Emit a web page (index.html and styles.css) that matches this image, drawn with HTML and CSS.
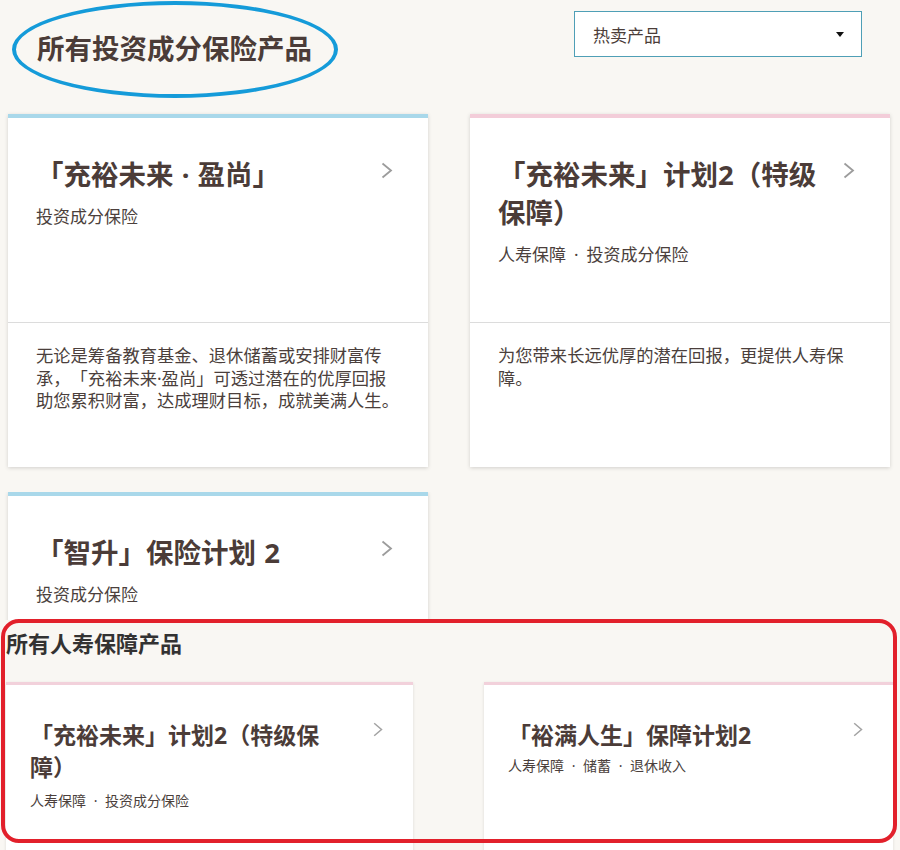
FILE: index.html
```html
<!DOCTYPE html>
<html lang="zh-CN">
<head>
<meta charset="utf-8">
<title>所有投资成分保险产品</title>
<link rel="stylesheet" href="styles.css">
</head>
<body>
<div class="page">
  <header class="header">
    <h1 class="heading">所有投资成分保险产品</h1>
    <div class="select">
      <span class="select-text">热卖产品</span>
      <span class="caret"></span>
    </div>
  </header>

  <section class="grid">
    <article class="card card-blue">
      <div class="card-head">
        <div class="head-text">
          <h2 class="card-title">「充裕未来 · 盈尚」</h2>
          <p class="card-sub">投资成分保险</p>
        </div>
        <svg class="chev" viewBox="0 0 12 17" width="12" height="17"><path d="M1.5 1.5 L10 8.5 L1.5 15.5" fill="none" stroke="#9c9c9c" stroke-width="1.8"/></svg>
      </div>
      <div class="card-desc">无论是筹备教育基金、退休储蓄或安排财富传承，「充裕未来·盈尚」可透过潜在的优厚回报助您累积财富，达成理财目标，成就美满人生。</div>
    </article>

    <article class="card card-pink">
      <div class="card-head">
        <div class="head-text">
          <h2 class="card-title">「充裕未来」计划2（特级保障）</h2>
          <p class="card-sub">人寿保障 · 投资成分保险</p>
        </div>
        <svg class="chev" viewBox="0 0 12 17" width="12" height="17"><path d="M1.5 1.5 L10 8.5 L1.5 15.5" fill="none" stroke="#9c9c9c" stroke-width="1.8"/></svg>
      </div>
      <div class="card-desc">为您带来长远优厚的潜在回报，更提供人寿保障。</div>
    </article>
  </section>

  <section class="grid row-cut">
    <article class="card card-blue">
      <div class="card-head">
        <div class="head-text">
          <h2 class="card-title">「智升」保险计划 2</h2>
          <p class="card-sub">投资成分保险</p>
        </div>
        <svg class="chev" viewBox="0 0 12 17" width="12" height="17"><path d="M1.5 1.5 L10 8.5 L1.5 15.5" fill="none" stroke="#9c9c9c" stroke-width="1.8"/></svg>
      </div>
    </article>
  </section>

  <section class="life">
    <h2 class="life-heading">所有人寿保障产品</h2>
    <div class="life-grid">
      <article class="lcard">
        <div class="lcard-head">
          <div class="lhead-text">
            <h3 class="lcard-title">「充裕未来」计划2（特级保障）</h3>
            <p class="lcard-sub">人寿保障 · 投资成分保险</p>
          </div>
          <svg class="lchev" viewBox="0 0 10 15" width="10" height="15"><path d="M1.2 1.2 L8.5 7.5 L1.2 13.8" fill="none" stroke="#a3a3a3" stroke-width="1.5"/></svg>
        </div>
      </article>
      <article class="lcard">
        <div class="lcard-head">
          <div class="lhead-text">
            <h3 class="lcard-title">「裕满人生」保障计划2</h3>
            <p class="lcard-sub lcard-sub-tight">人寿保障 · 储蓄 · 退休收入</p>
          </div>
          <svg class="lchev" viewBox="0 0 10 15" width="10" height="15"><path d="M1.2 1.2 L8.5 7.5 L1.2 13.8" fill="none" stroke="#a3a3a3" stroke-width="1.5"/></svg>
        </div>
      </article>
    </div>
  </section>

  <div class="mark-ellipse"></div>
  <div class="mark-rect"></div>
</div>
</body>
</html>
```

FILE: styles.css
```css
html, body {
  margin: 0;
  padding: 0;
}
body {
  background: #f9f7f3;
  font-family: "Noto Sans", "Noto Sans CJK SC", sans-serif;
  color: #4b3d39;
  height: 850px;
  overflow: hidden;
  text-spacing-trim: space-all;
}
.page {
  position: relative;
  width: 900px;
}
.header {
  display: flex;
  justify-content: space-between;
  align-items: flex-start;
  height: 114px;
  box-sizing: border-box;
  padding: 11px 38px 0 37px;
}
.heading {
  margin: 19px 0 0;
  font-size: 27.5px;
  line-height: 38px;
  font-weight: 700;
  color: #4b3c38;
}
.select {
  width: 288px;
  height: 46px;
  box-sizing: border-box;
  border: 1.5px solid #4f9fb6;
  background: #fff;
  display: flex;
  align-items: center;
  justify-content: space-between;
  padding: 0 17px 0 18px;
}
.select-text {
  font-size: 17px;
  color: #4b3d39;
}
.caret {
  width: 0;
  height: 0;
  border-left: 4px solid transparent;
  border-right: 4px solid transparent;
  border-top: 5px solid #111;
  margin-top: 1px;
}
.grid {
  display: grid;
  grid-template-columns: 420px 420px;
  column-gap: 42px;
  padding-left: 8px;
}
.card {
  background: #fff;
  box-shadow: 0 1px 4px rgba(0, 0, 0, 0.16);
}
.card-blue {
  border-top: 4px solid #a9d8ea;
}
.card-pink {
  border-top: 4px solid #f3cdd9;
}
.card-head {
  display: flex;
  align-items: flex-start;
  gap: 14px;
  min-height: 204px;
  box-sizing: border-box;
  padding: 38px 35px 0 28px;
}
.head-text {
  flex: 1;
}
.card-title {
  margin: 0;
  font-size: 27.5px;
  line-height: 38px;
  font-weight: 700;
  color: #4b3c38;
  word-spacing: 1px;
}
.card-sub {
  margin: 10px 0 0;
  font-size: 17px;
  line-height: 25px;
  color: #4b3f3c;
  word-spacing: 3.5px;
}
.chev {
  flex: none;
  margin-top: 6px;
}
.card-desc {
  border-top: 1px solid #dcdcdc;
  min-height: 145px;
  box-sizing: border-box;
  padding: 22px 26px 20px 28px;
  font-size: 17.3px;
  line-height: 22.5px;
  color: #4b3f3c;
}
.row-cut {
  margin-top: 25px;
  height: 128px;
  overflow: hidden;
  padding-left: 8px;
  padding-right: 8px;
}
.life {
  padding: 8px 0 0 6px;
}
.life-heading {
  margin: 0;
  font-size: 22px;
  line-height: 30px;
  font-weight: 700;
  color: #333232;
}
.life-grid {
  display: grid;
  grid-template-columns: 407px 409px;
  column-gap: 71px;
  margin-top: 24px;
}
.lcard {
  background: #fff;
  border-top: 3px solid #f2d1db;
  box-shadow: 0 1px 3px rgba(0, 0, 0, 0.12);
  height: 200px;
}
.lcard-head {
  display: flex;
  align-items: flex-start;
  gap: 40px;
  padding: 34px 30px 0 24px;
}
.lhead-text {
  flex: 1;
}
.lcard-title {
  margin: 0;
  font-size: 23px;
  line-height: 32px;
  font-weight: 700;
  color: #4b3c38;
}
.lcard-sub {
  margin: 8px 0 0;
  font-size: 14px;
  line-height: 20px;
  color: #4b3f3c;
  word-spacing: 4px;
}
.lcard-sub-tight {
  margin-top: 5px;
}
.lchev {
  flex: none;
  margin-top: 3px;
}
.mark-ellipse {
  position: absolute;
  left: 12px;
  top: 1px;
  width: 326px;
  height: 97px;
  box-sizing: border-box;
  border: 4px solid #159bd9;
  border-radius: 50%;
  pointer-events: none;
}
.mark-rect {
  position: absolute;
  left: 1px;
  top: 619px;
  width: 896px;
  height: 224px;
  box-sizing: border-box;
  border: 4px solid #e2202b;
  border-radius: 18px;
  pointer-events: none;
}
```
